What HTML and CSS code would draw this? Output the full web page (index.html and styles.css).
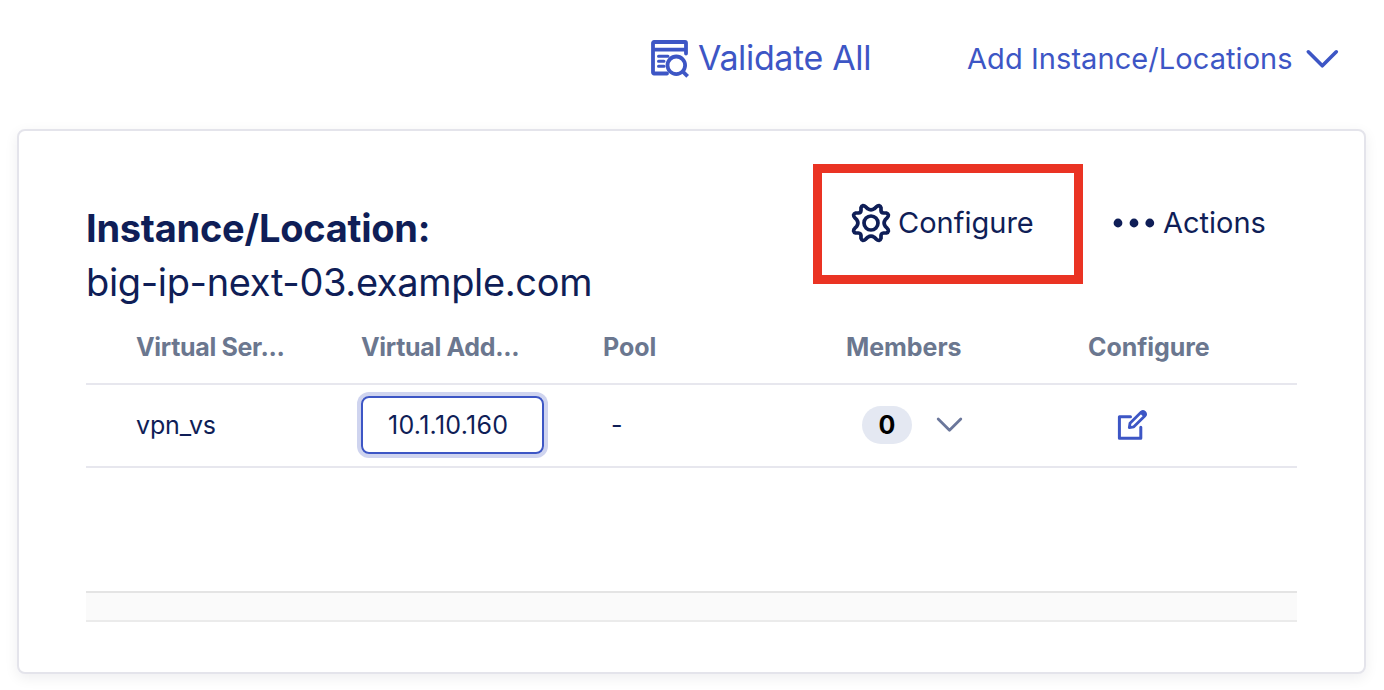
FILE: index.html
```html
<!DOCTYPE html>
<html lang="en">
<head>
<meta charset="utf-8">
<title>Instance/Locations</title>
<link rel="stylesheet" href="styles.css">
</head>
<body>
<header class="toolbar">
  <a class="validate">
    <svg class="validate-icon" width="40" height="40" viewBox="0 0 40 40" fill="none" stroke="currentColor" stroke-width="3.8" stroke-linecap="round" stroke-linejoin="round">
      <path d="M17 34.500H4a1 1 0 0 1-1-1V4a1 1 0 0 1 1-1h31a1 1 0 0 1 1 1v10.500M3 10.600h33"/>
      <path stroke-width="3" d="M8.500 17.200h9.500M8.500 22.200h5.500M8.500 27.200h5.500"/>
      <circle cx="26.300" cy="26.300" r="8.800"/>
      <path stroke-linecap="square" d="M33 32.800l3.300 3.300"/>
    </svg>
    <span class="validate-label">Validate All</span>
  </a>
  <a class="add">
    <span class="add-label">Add Instance/Locations</span>
    <svg width="34" height="20" viewBox="0 0 34 20" fill="none" stroke="currentColor" stroke-width="3.600" stroke-linecap="round" stroke-linejoin="round"><path d="M3.300 2.800L17.300 16.800 31.300 2.800"/></svg>
  </a>
</header>
<main class="card">
  <div class="card-head">
    <h1 class="title"><span class="title-label">Instance/Location:</span><span class="title-host">big-ip-next-03.example.com</span></h1>
    <div class="card-actions">
      <button class="action highlighted">
        <svg class="gear" width="40" height="40" viewBox="-20 -20 40 40" fill="none" stroke="currentColor" stroke-width="3.700" stroke-linejoin="round">
          <path d="M-8 -17.400 Q-6.500 -17.400 -5.300 -16.200 L-3.200 -14.200 Q0 -12 3.200 -14.200 L5.300 -16.200 Q6.500 -17.400 8 -17.400 Q9.600 -17 10 -15.400 L10 -12.500 Q10.200 -10.200 12.500 -10 L15.400 -10 Q17 -9.600 17.400 -8 Q17.400 -6.500 16.200 -5.300 L14.200 -3.200 Q12 0 14.200 3.200 L16.200 5.300 Q17.400 6.500 17.400 8 Q17 9.600 15.400 10 L12.500 10 Q10.200 10.200 10 12.500 L10 15.400 Q9.600 17 8 17.400 Q6.500 17.400 5.300 16.200 L3.200 14.200 Q0 12 -3.200 14.200 L-5.300 16.200 Q-6.500 17.400 -8 17.400 Q-9.600 17 -10 15.400 L-10 12.500 Q-10.200 10.200 -12.500 10 L-15.400 10 Q-17 9.600 -17.400 8 Q-17.400 6.500 -16.200 5.300 L-14.200 3.200 Q-12 0 -14.200 -3.200 L-16.200 -5.300 Q-17.400 -6.500 -17.400 -8 Q-17 -9.600 -15.400 -10 L-12.500 -10 Q-10.200 -10.200 -10 -12.500 L-10 -15.400 Q-9.600 -17 -8 -17.400Z"/>
          <circle r="7"/>
        </svg>
        <span class="configure-label">Configure</span>
      </button>
      <button class="action menu">
        <svg width="42" height="12" viewBox="0 0 42 12" fill="currentColor"><circle cx="5" cy="6" r="4.400"/><circle cx="21" cy="6" r="4.400"/><circle cx="36.800" cy="6" r="4.400"/></svg>
        <span class="actions-label">Actions</span>
      </button>
    </div>
  </div>
  <div class="grid">
    <div class="row row-head">
      <span class="h-server">Virtual Ser...</span><span class="h-address">Virtual Add...</span><span class="h-pool">Pool</span><span class="h-members">Members</span><span class="h-configure">Configure</span>
    </div>
    <div class="row row-data">
      <span class="server">vpn_vs</span>
      <span class="address"><span class="address-text">10.1.10.160</span></span>
      <span class="pool">-</span>
      <span class="members"><span class="badge">0</span>
        <svg width="28" height="18" viewBox="0 0 28 18" fill="none" stroke="currentColor" stroke-width="2.800" stroke-linecap="round" stroke-linejoin="round"><path d="M2.200 3L13.500 14.300 24.800 3"/></svg>
      </span>
      <span class="edit">
        <svg width="32" height="32" viewBox="0 0 32 32" fill="none" stroke="currentColor" stroke-width="3" stroke-linecap="round" stroke-linejoin="round">
          <path d="M14.500 7.800H3.400V29.200H24.800V18.300"/>
          <path stroke-width="2.800" d="M13.300 18.600L14 14.200 25.300 3.100Q27 1.900 28.700 3.300 30.300 5 29 6.700L17.800 17.800ZM25.300 3.800l3.300 3.300"/>
        </svg>
      </span>
    </div>
    <div class="blank"></div>
    <div class="grid-foot"></div>
  </div>
</main>
</body>
</html>
```
FILE: styles.css
```css
* { box-sizing: border-box; }
body {
  margin: 0;
  height: 690px;
  overflow: hidden;
  background: #fff;
  color: #0f1e57;
  font-family: Inter, "Liberation Sans", sans-serif;
}
svg { display: block; flex: none; }
span { white-space: nowrap; }
.toolbar {
  display: flex;
  height: 117px;
  padding-left: 650px;
  color: #3d56c5;
}
.validate, .add { display: flex; align-items: center; height: 117px; }
.validate { width: 317px; }
.validate-label { margin-left: 8px; padding-bottom: 2px; font-size: 34px; letter-spacing: -0.35px; }
.add-label { width: 338px; font-size: 29px; letter-spacing: 0.07px; }
.card {
  width: 1349px;
  height: 545px;
  margin: 12px 0 0 17px;
  padding: 33px 67px 0;
  border: 2px solid #e4e4eb;
  border-radius: 8px;
  background: #fff;
  box-shadow: 0 4px 14px rgba(20, 20, 40, 0.07);
}
.card-head { display: flex; height: 147px; }
.title { display: flex; flex-direction: column; width: 727px; margin: 37px 0 0; font-size: 38px; line-height: 54px; }
.title-label { font-weight: 700; letter-spacing: -0.25px; }
.title-host { font-weight: 400; letter-spacing: -0.35px; }
.card-actions { display: flex; align-items: flex-start; }
.action {
  display: flex;
  align-items: center;
  height: 120px;
  padding: 0 0 2px;
  border: 0;
  background: none;
  color: inherit;
  font: 400 29px/36px Inter, "Liberation Sans", sans-serif;
}
.highlighted { width: 270px; padding-left: 29px; border: 9px solid #ea3323; }
.configure-label { margin-left: 7px; }
.menu { margin-left: 30px; }
.actions-label { margin-left: 8px; }
.row { display: grid; align-items: center; grid-template-columns: 225px 242px 243px 242px 1fr; padding-left: 50px; border-bottom: 2px solid #e7e7ee; }
.row-head { height: 74px; padding-bottom: 1px; color: #6b778f; font-size: 25px; font-weight: 700; letter-spacing: -0.05px; }
.h-server, .h-address { letter-spacing: -0.32px; }
.row-data { height: 83px; padding-bottom: 1px; font-size: 25px; }
.server { letter-spacing: -0.15px; }
.address {
  display: flex;
  align-items: center;
  padding-left: 25px;
  width: 183px;
  height: 58px;
  border: 2px solid #3d56c5;
  border-radius: 8px;
  box-shadow: 0 0 0 4px #cfd4ef;
}
.address-text { letter-spacing: 0.27px; }
.pool { padding-left: 8px; }
.members { display: flex; align-items: center; gap: 24px; padding-left: 16px; color: #6b779b; }
.badge { width: 50px; height: 38px; border-radius: 19px; background: #e4e8f2; color: #000; font-weight: 700; line-height: 38px; text-align: center; }
.edit { padding-left: 28px; color: #3d56c5; }
.blank { height: 123px; }
.grid-foot { height: 31px; border-top: 2px solid #e4e4e4; border-bottom: 2px solid #ebebeb; background: #fafafa; }
```
